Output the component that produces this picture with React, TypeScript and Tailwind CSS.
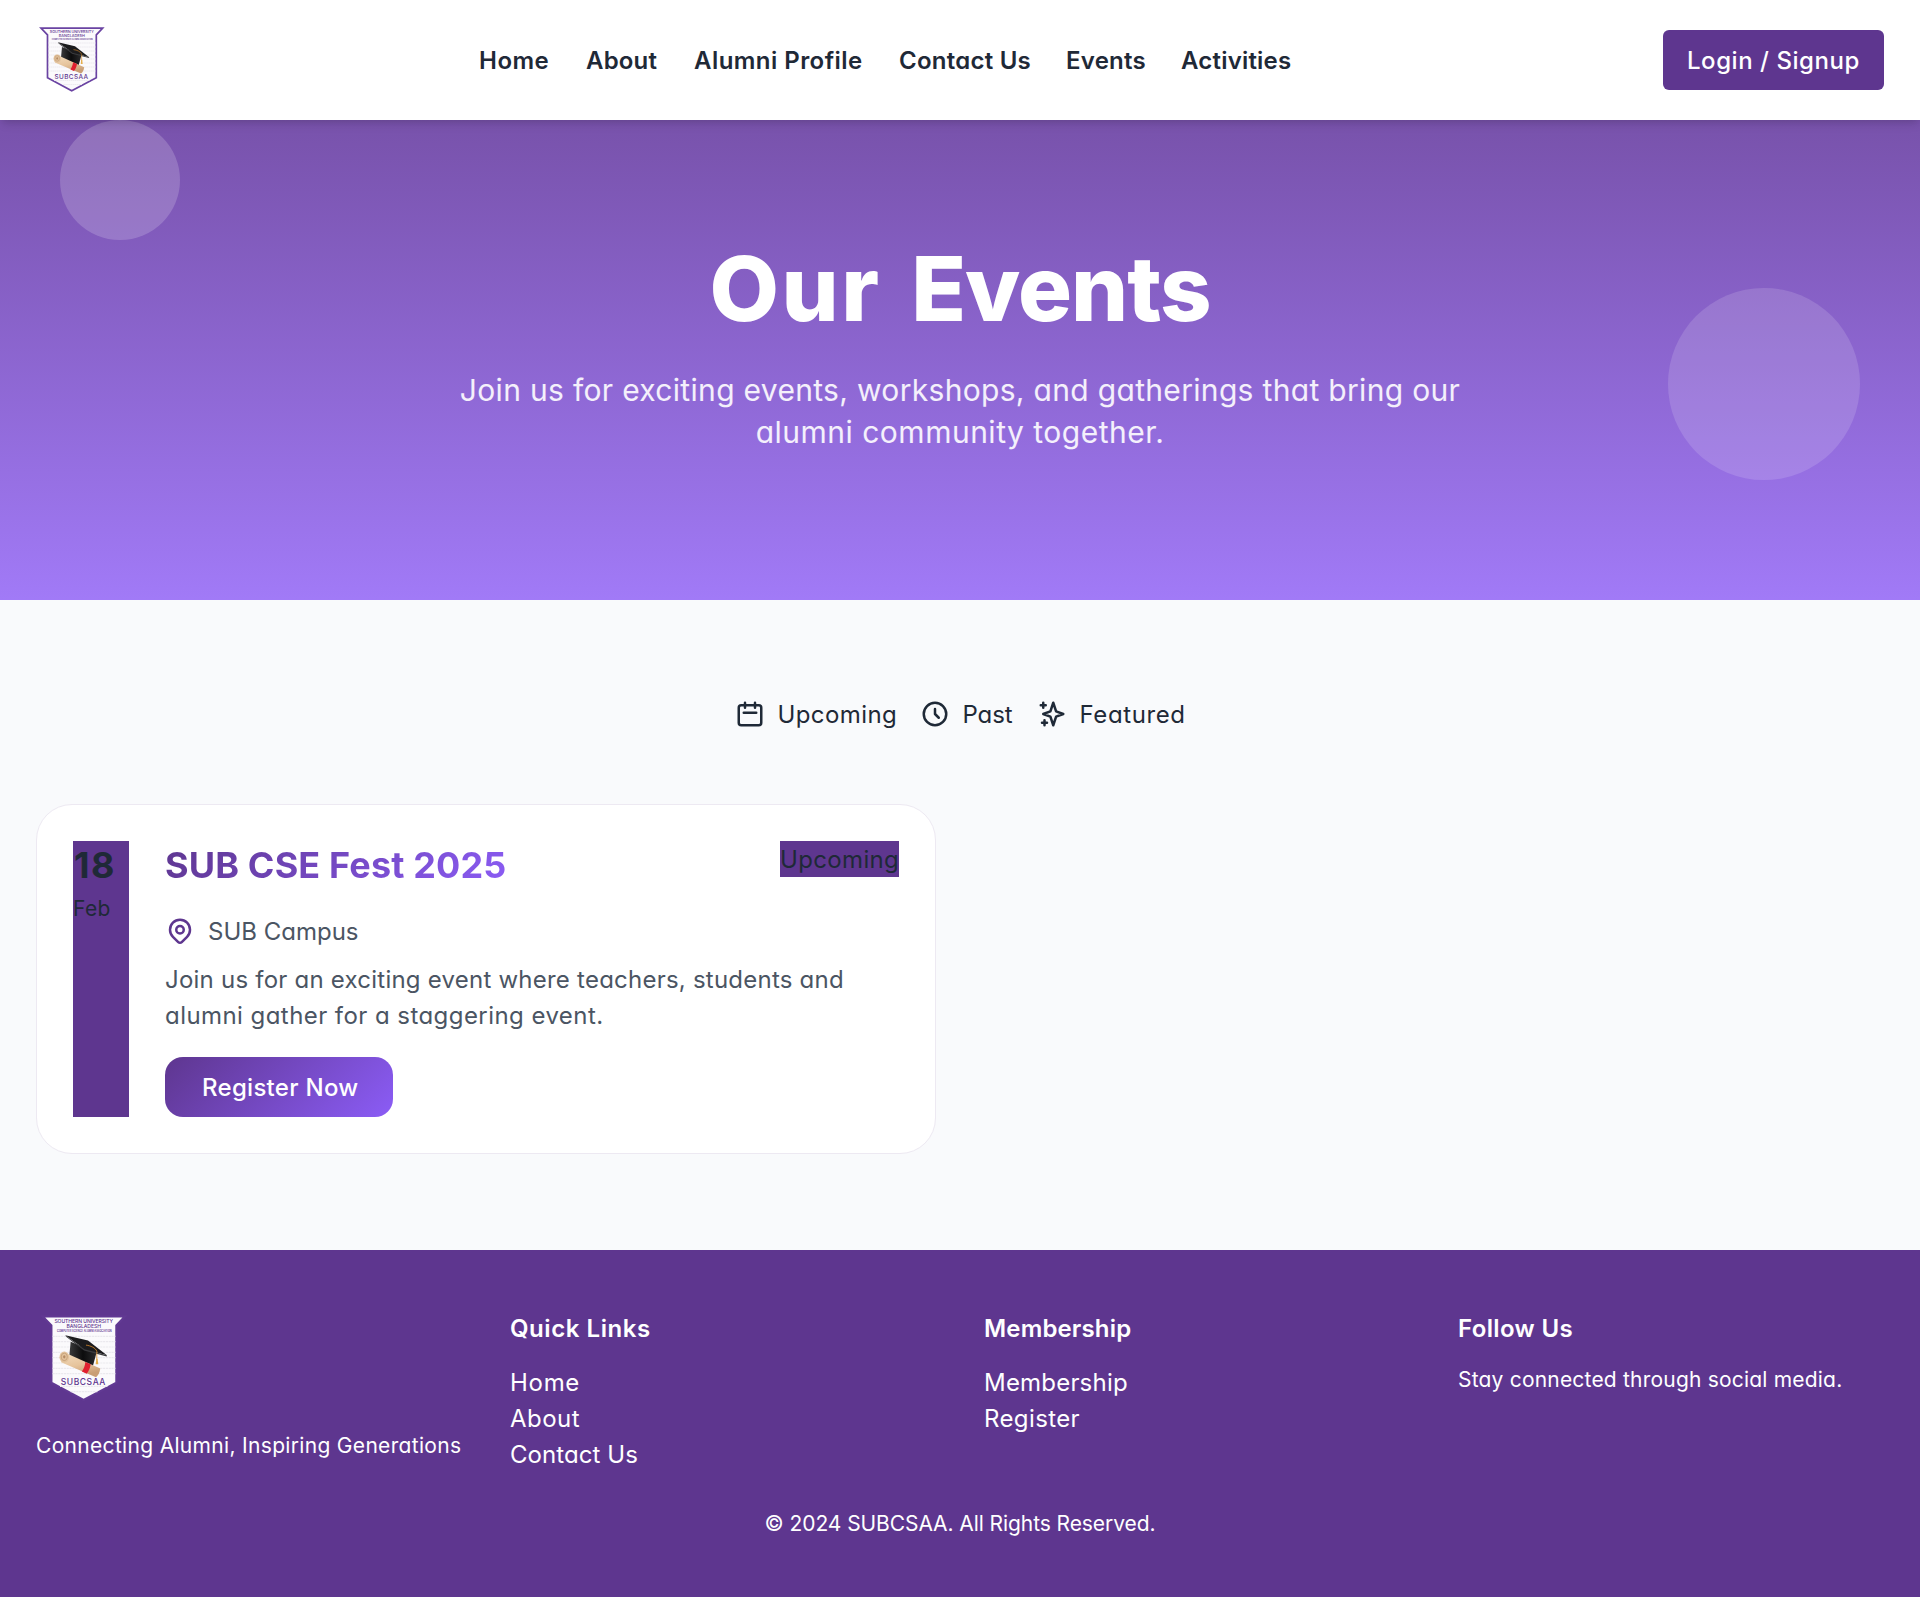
import {
  HiOutlineCalendar,
  HiOutlineClock,
  HiOutlineLocationMarker,
  HiOutlineSparkles,
} from "react-icons/hi";

const NAV = [
  { label: "Home", cls: "w-[71px] tracking-[0.49px]" },
  { label: "About", cls: "w-[72px] tracking-[0.18px]" },
  { label: "Alumni Profile", cls: "w-[169px] tracking-[0.45px]" },
  { label: "Contact Us", cls: "w-[131px] tracking-[0.25px]" },
  { label: "Events", cls: "w-[79px] tracking-[0.25px]" },
  { label: "Activities", cls: "w-[111px] tracking-[0.2px]" },
];

const FILTERS = [
  { label: "Upcoming", Icon: HiOutlineCalendar, cls: "w-[119px] tracking-[0.4px]" },
  { label: "Past", Icon: HiOutlineClock, cls: "w-[51px] tracking-[-0.1px]" },
  { label: "Featured", Icon: HiOutlineSparkles, cls: "w-[107px] tracking-[0.6px]" },
];

const QUICK_LINKS = [
  { label: "Home", cls: "tracking-[0.7px]" },
  { label: "About", cls: "tracking-[0.45px]" },
  { label: "Contact Us", cls: "tracking-[0.08px]" },
];

const MEMBER_LINKS = [
  { label: "Membership", cls: "tracking-[0.2px]" },
  { label: "Register", cls: "tracking-[0.38px]" },
];

function Logo({ className }: { className: string }) {
  return (
    <svg viewBox="0 0 72 72" className={className} role="img" aria-label="SUBCSAA">
      <defs>
        <linearGradient id="scroll" x1="0" y1="0" x2="0.35" y2="1">
          <stop offset="0" stopColor="#f5dfc2" />
          <stop offset="0.6" stopColor="#e6c49c" />
          <stop offset="1" stopColor="#c99e74" />
        </linearGradient>
        <linearGradient id="cap" x1="0" y1="0" x2="1" y2="0">
          <stop offset="0" stopColor="#3a3a3c" />
          <stop offset="0.5" stopColor="#0c0c0d" />
          <stop offset="1" stopColor="#2a2a2c" />
        </linearGradient>
      </defs>
      <path
        d="M5 4.1H66.7L60.3 10.9V53.8L35.7 66.7L11.5 53.8V10.9Z"
        fill="#fbfafc"
        stroke="currentColor"
        strokeWidth="1.7"
      />
      <g stroke="#ebe9ee" strokeWidth="0.9" strokeDasharray="1.6 0.5">
        <path d="M12.5 19H59.5M12.5 23H59.5M12.5 27H59.5M12.5 31H59.5M12.5 35H59.5M12.5 39H59.5M12.5 43H59.5M12.5 47H59.5M18 56.5H54M26 60.5H46" />
      </g>
      <g fill="#5e368f" textAnchor="middle" fontFamily="Inter, sans-serif">
        <text x="35.8" y="9.2" fontSize="3.8" fontWeight="500" textLength="44" lengthAdjust="spacing">SOUTHERN UNIVERSITY</text>
        <text x="35.8" y="13" fontSize="3.8" fontWeight="500" textLength="26" lengthAdjust="spacing">BANGLADESH</text>
        <text x="36.3" y="15.9" fontSize="2.1" fontWeight="600" textLength="41" lengthAdjust="spacingAndGlyphs">COMPUTER SCIENCE ALUMNI ASSOCIATION</text>
        <text x="35.3" y="55.2" fontSize="6.4" fontWeight="500" textLength="33.5" lengthAdjust="spacing">SUBCSAA</text>
      </g>
      <path d="M26 23L24.9 34.5C29 40 38 44 42.5 41.8L45.5 31Z" fill="url(#cap)" />
      <path d="M22 18.2L39 22.2L53.2 33.2L36.5 28.7Z" fill="#1b1b1d" />
      <path d="M22 18.2L36.5 28.7L53.2 33.2L53 34.1L36 29.7L22.6 19.4Z" fill="#3b3b3e" />
      <path d="M37.5 25.6C41 26 44.6 27.6 45.6 30.2V37" fill="none" stroke="#d98a2b" strokeWidth="0.6" />
      <path d="M45.2 35.8H46.2L46.7 40H44.8Z" fill="#e5ae4b" />
      <path d="M20.2 30.6L48.2 43.2C47.8 46.2 46.8 48.4 45 49.6L18.8 38.4Z" fill="url(#scroll)" />
      <ellipse cx="21.2" cy="34.6" rx="3.6" ry="4.2" fill="#e2c29c" />
      <ellipse cx="21.2" cy="34.4" rx="2.3" ry="2.8" fill="none" stroke="#c29c74" strokeWidth="0.6" />
      <ellipse cx="21.2" cy="34.4" rx="0.9" ry="1.2" fill="#b58b64" />
      <path d="M37 38.2L41 40C40.6 42.8 39.6 45.2 38 47L34.4 45.4C36 43 36.8 40.8 37 38.2Z" fill="#e0202f" />
    </svg>
  );
}

function Header() {
  return (
    <header className="relative z-10 flex h-[120px] items-center justify-between bg-white px-9 shadow-[0_6px_9px_-1.5px_rgba(0,0,0,0.1),0_3px_6px_-3px_rgba(0,0,0,0.1)]">
      <Logo className="size-[72px] text-[#6a43a2]" />
      <nav className="flex gap-9 pt-[2px] text-2xl leading-9 font-semibold">
        {NAV.map((n) => (
          <a key={n.label} className={`whitespace-nowrap ${n.cls}`}>
            {n.label}
          </a>
        ))}
      </nav>
      <button className="h-[60px] w-[221px] rounded-[6px] bg-[#5e368f] pt-[2px] pl-6 text-left text-2xl leading-9 font-medium tracking-[0.54px] whitespace-nowrap text-white">
        Login / Signup
      </button>
    </header>
  );
}

function Hero() {
  return (
    <section className="relative flex h-[480px] flex-col items-center overflow-hidden bg-linear-to-b from-[#7852ab] to-[#a17af7] pt-[124px] text-center">
      <div className="absolute top-0 left-[60px] size-[120px] rounded-full bg-white/18" />
      <div className="absolute top-[168px] right-[60px] size-[192px] rounded-full bg-white/14" />
      <h1 className="text-[90px] leading-[90px] font-extrabold tracking-[-1px] [word-spacing:11px] text-white">
        <span className="tracking-[2.5px]">Our</span> Events
      </h1>
      <p className="mt-[35px] text-3xl leading-[42px] whitespace-nowrap text-white/90">
        <span className="tracking-[0.32px]">
          Join us for exciting events, workshops, and gatherings that bring our
        </span>
        <br />
        <span className="tracking-[0.5px]">alumni community together.</span>
      </p>
    </section>
  );
}

function EventCard() {
  return (
    <article className="flex h-[350px] w-[900px] gap-9 rounded-[36px] border border-[#ede9f2] bg-white p-9">
      <div className="w-14 shrink-0 bg-[#5e368f]">
        <div className="h-[53px] pt-[3px] pl-px text-4xl leading-[42px] font-bold tracking-[1.5px]">18</div>
        <div className="text-[21px] leading-[30px] tracking-[0.4px]">Feb</div>
      </div>
      <div className="flex flex-1 flex-col items-start">
        <div className="flex w-full items-start justify-between">
          <h3 className="bg-linear-[135deg] from-[#5e368f] to-[#8b5cf6] bg-clip-text text-4xl leading-[48px] font-bold tracking-[0.15px] whitespace-nowrap text-transparent">
            SUB CSE Fest 2025
          </h3>
          <span className="w-[119px] bg-[#5e368f] pt-[2px] text-2xl leading-[34px] tracking-[0.35px]">Upcoming</span>
        </div>
        <div className="mt-6 flex h-9 items-center gap-3 text-2xl leading-[34px] text-[#4b5563]">
          <HiOutlineLocationMarker className="size-[30px] text-[#5e368f]" />
          <span className="pt-[2px] pl-px">SUB Campus</span>
        </div>
        <p className="mt-[13px] text-2xl leading-9 whitespace-nowrap text-[#4b5563]">
          <span className="tracking-[0.23px]">Join us for an exciting event where teachers, students and</span>
          <br />
          <span className="tracking-[0.44px]">alumni gather for a staggering event.</span>
        </p>
        <button className="mt-[23px] h-[60px] w-[228px] rounded-[18px] bg-linear-[135deg] from-[#5e368f] to-[#8b5cf6] pt-[2px] pl-[37px] text-left text-2xl leading-9 font-medium tracking-[0.29px] whitespace-nowrap text-white">
          Register Now
        </button>
      </div>
    </article>
  );
}

function Footer() {
  return (
    <footer className="h-[347px] bg-[#5e368f] px-9 pt-[61px] text-white">
      <div className="grid grid-cols-4 gap-12">
        <div>
          <Logo className="size-24 text-[#613993]" />
          <p className="mt-6 text-[21px] leading-[30px] tracking-[0.32px] whitespace-nowrap">
            Connecting Alumni, Inspiring Generations
          </p>
        </div>
        <div className="text-2xl leading-9">
          <h4 className="font-semibold tracking-[0.55px]">Quick Links</h4>
          <ul className="mt-[18px]">
            {QUICK_LINKS.map((l) => (
              <li key={l.label} className={l.cls}>{l.label}</li>
            ))}
          </ul>
        </div>
        <div className="text-2xl leading-9">
          <h4 className="font-semibold tracking-[0.15px]">Membership</h4>
          <ul className="mt-[18px]">
            {MEMBER_LINKS.map((l) => (
              <li key={l.label} className={l.cls}>{l.label}</li>
            ))}
          </ul>
        </div>
        <div>
          <h4 className="text-2xl leading-9 font-semibold tracking-[0.35px]">Follow Us</h4>
          <p className="mt-[18px] text-[21px] leading-[30px] tracking-[0.2px] whitespace-nowrap">
            Stay connected through social media.
          </p>
        </div>
      </div>
      <p className="mt-9 text-center text-[21px] leading-[30px] tracking-[-0.08px]">
        © 2024 SUBCSAA. All Rights Reserved.
      </p>
    </footer>
  );
}

export default function App() {
  return (
    <div className="min-h-[1597px] w-[1920px] bg-[#f9fafc] font-['Inter',sans-serif] text-[#1f2937] [font-feature-settings:'cv11']">
      <Header />
      <Hero />
      <main className="h-[650px] px-9 pt-24">
        <div className="flex h-9 justify-center gap-6 text-2xl leading-[34px]">
          {FILTERS.map(({ label, Icon, cls }) => (
            <button key={label} className="flex items-center gap-3">
              <Icon className="size-[30px]" />
              <span className={`pt-[2px] pl-px text-left whitespace-nowrap ${cls}`}>{label}</span>
            </button>
          ))}
        </div>
        <div className="mt-[72px]">
          <EventCard />
        </div>
      </main>
      <Footer />
    </div>
  );
}
